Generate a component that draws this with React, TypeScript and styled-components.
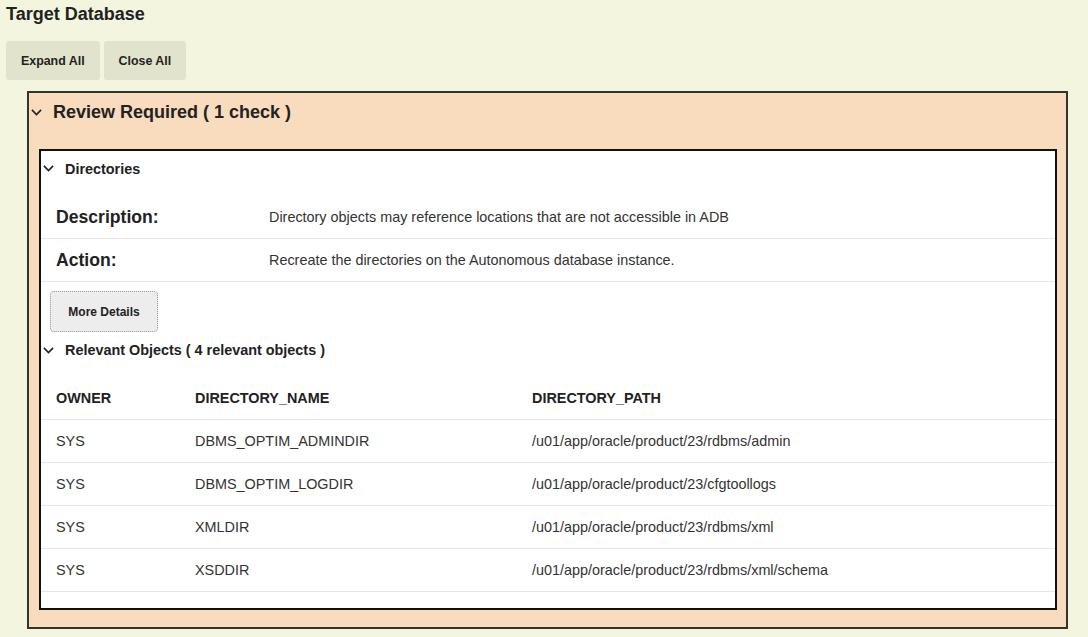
import React from "react";
import styled, { createGlobalStyle } from "styled-components";

const Global = createGlobalStyle`
  html, body { margin: 0; padding: 0; }
  body {
    background: #f3f5df;
    font-family: "Liberation Sans", Arial, sans-serif;
    color: #222;
  }
`;

const Page = styled.div`
  padding: 3px 6px 10px 6px;
`;

const Title = styled.h2`
  margin: 0;
  font-size: 18px;
  font-weight: bold;
  line-height: 22px;
  color: #222;
`;

const Toolbar = styled.div`
  display: flex;
  gap: 4px;
  margin-top: 16px;
`;

const ToolButton = styled.button`
  height: 39px;
  padding: 0 15px;
  border: none;
  border-radius: 3px;
  background: #e1e3cd;
  font-family: inherit;
  font-size: 12.4px;
  font-weight: bold;
  color: #222;
`;

const Outer = styled.section`
  margin: 11px 14px 0 21px;
  border: 2px solid #333;
  background: #f8dcbd;
  padding: 0 9px 17px 10px;
`;

const Header = styled.div<{ $size: number; $h: number }>`
  display: flex;
  align-items: center;
  height: ${(p) => p.$h}px;
  font-size: ${(p) => p.$size}px;
  font-weight: bold;
  color: #222;
`;

const Chevron = styled.svg<{ $ml: number; $mr: number }>`
  width: 11px;
  height: 7px;
  margin-left: ${(p) => p.$ml}px;
  margin-right: ${(p) => p.$mr}px;
  flex: none;
`;

const Inner = styled.div`
  margin-top: 18px;
  border: 2px solid #111;
  background: #fff;
  padding: 0 0 16px 0;
`;

const InfoBlock = styled.div`
  margin-top: 10px;
`;

const InfoRow = styled.div`
  display: grid;
  grid-template-columns: 213px 1fr;
  align-items: center;
  height: 42px;
  border-bottom: 1px solid #e6e6e6;
  padding-left: 15px;
`;

const Label = styled.div`
  font-size: 17.6px;
  font-weight: bold;
  color: #222;
`;

const Value = styled.div`
  font-size: 14.4px;
  color: #333;
`;

const DetailsButton = styled.button`
  margin: 9px 0 0 9px;
  width: 108px;
  height: 41px;
  border: 1px dotted #999;
  border-radius: 4px;
  background: #ededed;
  font-family: inherit;
  font-size: 12px;
  font-weight: bold;
  color: #222;
`;

const Table = styled.table`
  width: 100%;
  border-collapse: collapse;
  margin-top: 9px;
  font-size: 14.4px;
`;

const Th = styled.th<{ $w?: number }>`
  text-align: left;
  font-weight: bold;
  color: #222;
  height: 42px;
  padding: 0 0 0 15px;
  border-bottom: 1px solid #e6e6e6;
  width: ${(p) => (p.$w ? `${p.$w}px` : "auto")};
`;

const Td = styled.td`
  height: 42px;
  padding: 0 0 0 15px;
  border-bottom: 1px solid #e6e6e6;
  color: #333;
`;

const ChevronIcon = ({ ml, mr }: { ml: number; mr: number }) => (
  <Chevron $ml={ml} $mr={mr} viewBox="0 0 11 7">
    <path d="M0.9 0.9 L5.5 5.5 L10.1 0.9" fill="none" stroke="#222" strokeWidth="1.6" />
  </Chevron>
);

const rows = [
  ["SYS", "DBMS_OPTIM_ADMINDIR", "/u01/app/oracle/product/23/rdbms/admin"],
  ["SYS", "DBMS_OPTIM_LOGDIR", "/u01/app/oracle/product/23/cfgtoollogs"],
  ["SYS", "XMLDIR", "/u01/app/oracle/product/23/rdbms/xml"],
  ["SYS", "XSDDIR", "/u01/app/oracle/product/23/rdbms/xml/schema"],
];

export default function App() {
  return (
    <Page>
      <Global />
      <Title>Target Database</Title>
      <Toolbar>
        <ToolButton>Expand All</ToolButton>
        <ToolButton>Close All</ToolButton>
      </Toolbar>
      <Outer>
        <Header $size={18} $h={38}>
          <ChevronIcon ml={-8} mr={11} />
          Review Required ( 1 check )
        </Header>
        <Inner>
          <Header $size={14.4} $h={35}>
            <ChevronIcon ml={2} mr={11} />
            Directories
          </Header>
          <InfoBlock>
            <InfoRow>
              <Label>Description:</Label>
              <Value>Directory objects may reference locations that are not accessible in ADB</Value>
            </InfoRow>
            <InfoRow>
              <Label>Action:</Label>
              <Value>Recreate the directories on the Autonomous database instance.</Value>
            </InfoRow>
          </InfoBlock>
          <DetailsButton>More Details</DetailsButton>
          <Header $size={14.4} $h={36}>
            <ChevronIcon ml={2} mr={11} />
            Relevant Objects ( 4 relevant objects )
          </Header>
          <Table>
            <thead>
              <tr>
                <Th $w={124}>OWNER</Th>
                <Th $w={322}>DIRECTORY_NAME</Th>
                <Th>DIRECTORY_PATH</Th>
              </tr>
            </thead>
            <tbody>
              {rows.map((r) => (
                <tr key={r[1]}>
                  {r.map((c, i) => (
                    <Td key={i}>{c}</Td>
                  ))}
                </tr>
              ))}
            </tbody>
          </Table>
        </Inner>
      </Outer>
    </Page>
  );
}
